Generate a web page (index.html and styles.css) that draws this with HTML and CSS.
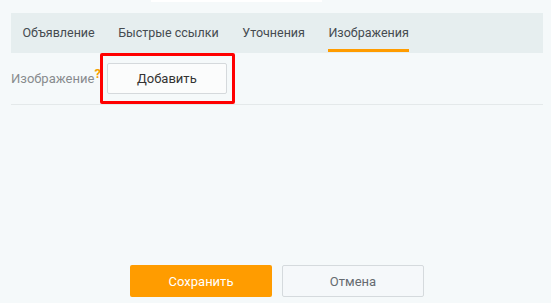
FILE: index.html
```html
<!DOCTYPE html>
<html lang="ru">
<head>
    <meta charset="UTF-8">
    <meta name="viewport" content="width=device-width, initial-scale=1.0">
    <title>Изображения</title>
    <link rel="stylesheet" href="styles.css">
</head>
<body>
    <div class="topstrip"></div>

    <div class="panel">
        <div class="tabs">
            <div class="tab">Объявление</div>
            <div class="tab">Быстрые ссылки</div>
            <div class="tab">Уточнения</div>
            <div class="tab active">Изображения</div>
        </div>

        <div class="field">
            <label class="label">Изображение<sup class="hint">?</sup></label>
            <span class="marked">
                <button class="btn-add">Добавить</button>
            </span>
        </div>

        <div class="actions">
            <button class="btn-save">Сохранить</button>
            <button class="btn-cancel">Отмена</button>
        </div>
    </div>
</body>
</html>
```

FILE: styles.css
```css
body{
    margin: 0;
    background-color: #f5f9fa;
    font-family: Roboto, "Noto Sans", sans-serif;
    font-size: 13px;
}
.topstrip{
    width: 171px;
    height: 2px;
    margin-left: 151px;
    background-color: #ffffff;
}
.panel{
    margin: 11px 8px 0 11px;
}
.tabs{
    display: flex;
    gap: 23.5px;
    height: 40px;
    padding-left: 11.5px;
    background-color: #e6eeef;
    font-size: 12.5px;
}
.tab{
    position: relative;
    line-height: 40px;
    color: #454b50;
}
.tab.active:after{
    content: "";
    position: absolute;
    left: 0;
    right: 0;
    bottom: 1px;
    height: 3px;
    background-color: #ff9c00;
}
.field{
    display: flex;
    align-items: center;
    padding: 10px 0;
    border-bottom: 1px solid #e4e9ea;
}
.label{
    color: #888b8e;
}
.hint{
    color: #f5a000;
    font-weight: bold;
    font-size: 13px;
    vertical-align: 5px;
    line-height: 0;
}
.marked{
    position: relative;
    margin-left: 6px;
    display: flex;
}
.marked:before{
    content: "";
    position: absolute;
    top: -10px;
    left: -7px;
    right: -8px;
    bottom: -10px;
    border: 3px solid #ff0000;
    border-radius: 2px;
}
.btn-add{
    width: 120px;
    height: 31px;
    font-family: inherit;
    font-size: 13px;
    color: #333;
    background-color: #fbfcfc;
    border: 1px solid #d5d9dc;
    border-radius: 2px;
}
.actions{
    display: flex;
    justify-content: center;
    gap: 10px;
    margin-top: 160px;
}
.btn-save{
    width: 142px;
    height: 32px;
    font-family: inherit;
    font-size: 13px;
    color: #ffffff;
    background-color: #ff9c00;
    border: none;
    border-radius: 2px;
}
.btn-cancel{
    width: 142px;
    height: 32px;
    font-family: inherit;
    font-size: 13px;
    color: #666b70;
    background-color: #f5f8fa;
    border: 1px solid #d5dadd;
    border-radius: 2px;
}
```
